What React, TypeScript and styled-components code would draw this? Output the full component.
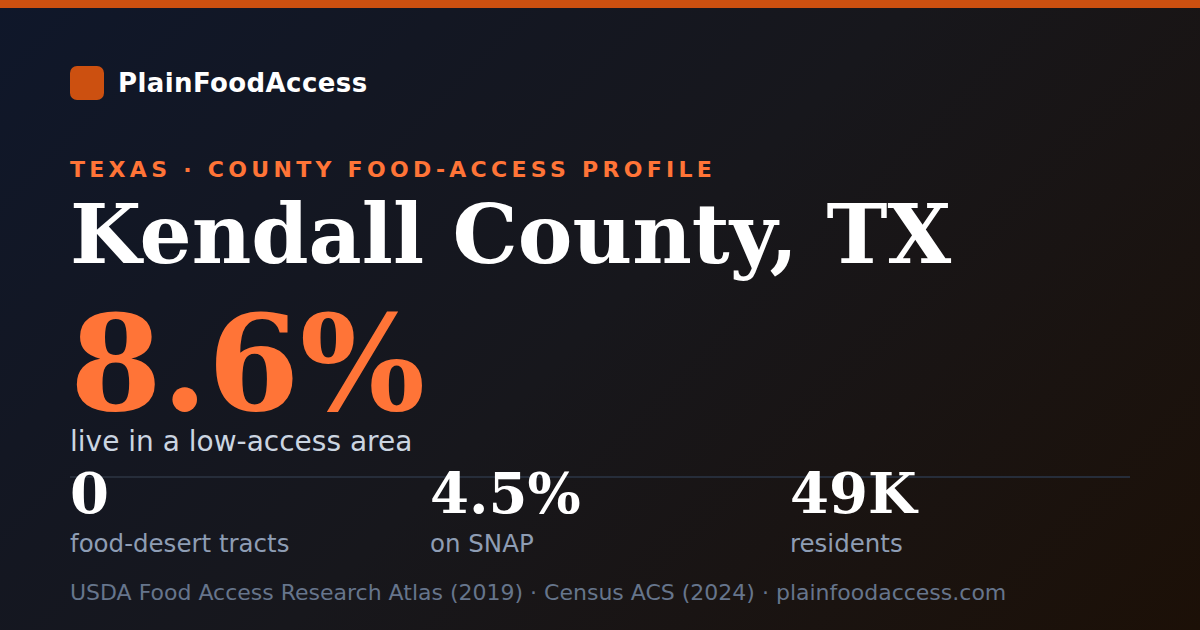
import React from "react";
import styled, { createGlobalStyle } from "styled-components";

const GlobalStyle = createGlobalStyle`
  html, body {
    margin: 0;
    padding: 0;
    background: #0f172a;
  }
  * {
    box-sizing: border-box;
  }
`;

const sans = `"DejaVu Sans", "Noto Sans", sans-serif`;
const serif = `"DejaVu Serif", "Liberation Serif", serif`;

const Card = styled.main`
  width: 1200px;
  height: 630px;
  overflow: hidden;
  display: flex;
  flex-direction: column;
  background: linear-gradient(135deg, #0f172a 0%, #17171c 50%, #1c1007 100%);
`;

const TopBar = styled.div`
  height: 8px;
  flex-shrink: 0;
  background: #cc5010;
`;

const Body = styled.div`
  display: flex;
  flex-direction: column;
  padding: 58px 70px 0;
`;

const Brand = styled.div`
  display: flex;
  align-items: center;
  gap: 14px;
  height: 34px;
`;

const LogoMark = styled.div`
  width: 34px;
  height: 34px;
  border-radius: 7px;
  background: #cc5010;
`;

const BrandName = styled.span`
  font-family: ${sans};
  font-weight: 700;
  font-size: 26px;
  line-height: 1;
  letter-spacing: 0.4px;
  color: #ffffff;
`;

const Eyebrow = styled.div`
  margin-top: 59px;
  font-family: ${sans};
  font-weight: 700;
  font-size: 22px;
  line-height: 1;
  letter-spacing: 0.195em;
  color: #ff7437;
`;

const Title = styled.h1`
  margin: 12px 0 0;
  font-family: ${serif};
  font-weight: 700;
  font-size: 82px;
  line-height: 1;
  color: #ffffff;
`;

const BigValue = styled.div`
  margin-top: 33px;
  font-family: ${serif};
  font-weight: 700;
  font-size: 132px;
  line-height: 112px;
  color: #ff7437;
`;

const BigCaption = styled.div`
  margin-top: 8px;
  font-family: ${sans};
  font-size: 28px;
  line-height: 1;
  color: #cbd5e1;
`;

const Stats = styled.div`
  display: flex;
  margin-top: 20px;
  border-top: 2px solid #262d3a;
`;

const Stat = styled.div`
  flex: 0 0 360px;
  display: flex;
  flex-direction: column;
`;

const StatValue = styled.div`
  margin-top: -13px;
  font-family: ${serif};
  font-weight: 700;
  font-size: 56px;
  line-height: 1;
  color: #ffffff;
`;

const StatLabel = styled.div`
  margin-top: 11px;
  font-family: ${sans};
  font-size: 24.5px;
  line-height: 1;
  color: #8e9db4;
`;

const Source = styled.footer`
  margin-top: 25px;
  font-family: ${sans};
  font-size: 22px;
  line-height: 1;
  color: #66758c;
`;

const stats = [
  { value: "0", label: "food-desert tracts" },
  { value: "4.5%", label: "on SNAP" },
  { value: "49K", label: "residents" },
];

export default function App() {
  return (
    <>
      <GlobalStyle />
      <Card>
        <TopBar />
        <Body>
          <Brand>
            <LogoMark />
            <BrandName>PlainFoodAccess</BrandName>
          </Brand>
          <Eyebrow>TEXAS · COUNTY FOOD-ACCESS PROFILE</Eyebrow>
          <Title>Kendall County, TX</Title>
          <BigValue>8.6%</BigValue>
          <BigCaption>live in a low-access area</BigCaption>
          <Stats>
            {stats.map((s) => (
              <Stat key={s.label}>
                <StatValue>{s.value}</StatValue>
                <StatLabel>{s.label}</StatLabel>
              </Stat>
            ))}
          </Stats>
          <Source>
            USDA Food Access Research Atlas (2019) · Census ACS (2024) · plainfoodaccess.com
          </Source>
        </Body>
      </Card>
    </>
  );
}
